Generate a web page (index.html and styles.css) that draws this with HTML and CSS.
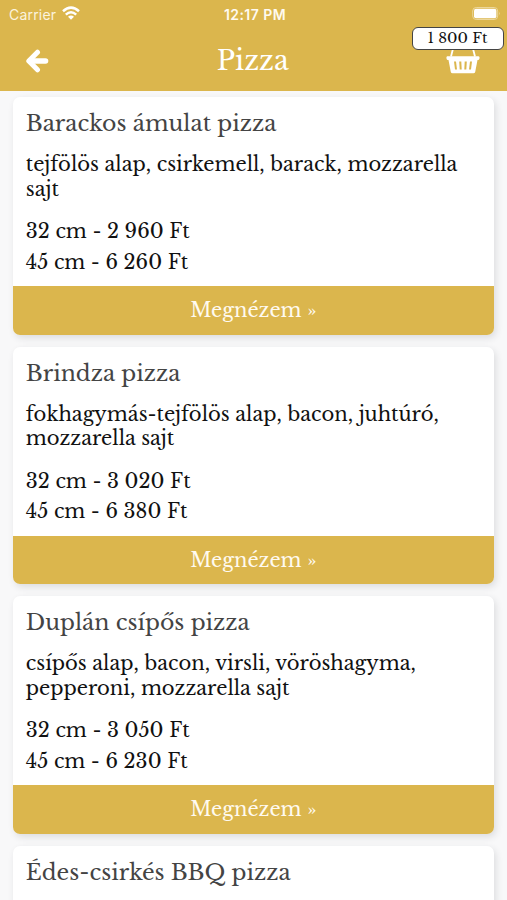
FILE: index.html
```html
<!DOCTYPE html>
<html lang="hu">
<head>
<meta charset="utf-8">
<title>Pizza</title>
<link rel="stylesheet" href="styles.css">
</head>
<body>
<header class="header">
  <div class="status">
    <div class="carrier"><span>Carrier</span>
      <svg class="wifi" viewBox="0 0 18 14" fill="none" stroke="#fff" stroke-width="2.5"><path d="M1 5.2Q9-2 17 5.2M3.8 8.6Q9 4 14.2 8.6"/><path d="M6 10.7Q9 8.4 12 10.7L9 13.7Z" fill="#fff" stroke="none"/></svg>
    </div>
    <div class="clock">12:17 PM</div>
    <svg class="battery" viewBox="0 0 29 13"><rect x=".7" y=".5" width="25" height="12" rx="3.5" fill="none" stroke="#ecd79b"/><rect x="2" y="1.8" width="22.4" height="9.4" rx="2" fill="#fff"/><path d="M27.2 4.8Q28.8 6.5 27.2 8.2Z" fill="#ecd79b"/></svg>
  </div>
  <div class="nav">
    <svg class="back" viewBox="0 0 24 24" fill="none" stroke="#fff" stroke-width="5" stroke-linecap="round" stroke-linejoin="round"><path d="M12.5 3.2L3.8 12L12.5 20.8"/><path d="M5 12H20.5" stroke-width="5.6"/></svg>
    <h1>Pizza</h1>
    <div class="cart">
      <svg class="basket" viewBox="0 0 34 28"><path d="M5 10.5L7.2 2M29 10.5L26.800 2" stroke="#fff" stroke-width="1.8" fill="none"/><path fill="#fff" fill-rule="evenodd" d="M1.5 10.3H32.5Q33.6 10.3 33.6 11.8T32.5 14H31.5L29.2 26Q28.9 27.3 27.4 27.3H6.6Q5.1 27.3 4.8 26L2.5 14H1.5Q.4 13.5 .4 11.8T1.5 10.3ZM8 15.5L9 23.5H11L10 15.5ZM13.200 15.500L13.700 23.500H15.700L15.300 15.500ZM18.700 15.500L18.300 23.500H20.300L20.800 15.500ZM24 15.500L23 23.500H25L26 15.500Z"/></svg>
      <span class="badge">1 800 Ft</span>
    </div>
  </div>
</header>
<main class="list">
  <article class="card">
    <div class="body"><h2>Barackos ámulat pizza</h2>
    <p class="desc">tejfölös alap, csirkemell, barack, mozzarella<br>sajt</p>
    <p class="price">32 cm - 2 960 Ft</p><p class="price">45 cm - 6 260 Ft</p></div>
    <a class="button">Megnézem »</a>
  </article>
  <article class="card">
    <div class="body"><h2>Brindza pizza</h2>
    <p class="desc">fokhagymás-tejfölös alap, bacon, juhtúró,<br>mozzarella sajt</p>
    <p class="price">32 cm - 3 020 Ft</p><p class="price">45 cm - 6 380 Ft</p></div>
    <a class="button">Megnézem »</a>
  </article>
  <article class="card">
    <div class="body"><h2>Duplán csípős pizza</h2>
    <p class="desc">csípős alap, bacon, virsli, vöröshagyma,<br>pepperoni, mozzarella sajt</p>
    <p class="price">32 cm - 3 050 Ft</p><p class="price">45 cm - 6 230 Ft</p></div>
    <a class="button">Megnézem »</a>
  </article>
  <article class="card">
    <div class="body"><h2>Édes-csirkés BBQ pizza</h2></div>
  </article>
</main>
</body>
</html>
```

FILE: styles.css
```css
* { box-sizing: border-box; }
html { height: 100%; overflow: hidden; }
body { margin: 0; height: 900px; overflow: hidden; background: #f8f8f9; font-family: "Libre Baskerville", "Liberation Serif", serif; color: #111; }
h1, h2, p { margin: 0; font-weight: 400; }
.header { height: 91px; background: #dbb64d; color: #fff; }
.status { height: 28px; display: grid; grid-template-columns: 1fr auto 1fr; align-items: center; padding: 0 6px 0 9px; font-family: Inter, "Liberation Sans", sans-serif; font-size: 14px; }
.carrier { display: flex; align-items: center; gap: 6px; color: #fbf3dd; letter-spacing: .2px; }
.wifi { width: 18px; height: 14px; margin-top: -2px; }
.clock { font-size: 14px; font-weight: 600; letter-spacing: .45px; color: #fffaf0; }
.battery { width: 29px; height: 13px; justify-self: end; margin-top: -2px; }
.nav { height: 63px; display: grid; grid-template-columns: 1fr auto 1fr; align-items: center; padding: 0 27.5px 0 25px; }
.back { width: 24px; height: 24px; margin-top: 3px; }
h1 { font-size: 26.7px; line-height: 40px; padding: 2px 0 0 1px; }
.cart { position: relative; justify-self: end; height: 63px; padding-top: 18px; }
.basket { display: block; width: 34px; height: 28px; }
.badge { position: absolute; top: -1px; right: -24px; width: 92px; height: 22.5px; border: 1.5px solid #444; border-radius: 6px; background: #fff; color: #111; font-size: 14.6px; line-height: 20px; text-align: center; }
.list { height: 809px; overflow: hidden; padding: 6px 13px 0 13px; display: grid; gap: 12px; align-content: start; }
.card { height: 237.6px; border-radius: 7px; background: #fff; overflow: hidden; display: flex; flex-direction: column; box-shadow: 2px 3px 7px rgba(40, 45, 55, .13); }
.body { flex: 1; padding: 12px 12.8px 0; white-space: nowrap; }
h2 { font-size: 22px; line-height: 30px; color: #444; }
.desc { margin-top: 13px; font-size: 19.54px; line-height: 24.5px; margin-bottom: 15px; }
.price { font-size: 19.5px; line-height: 30.5px; }
.button { height: 48.5px; background: #dbb64d; color: #fffaf0; font-size: 19.5px; line-height: 48px; text-align: center; }
```
